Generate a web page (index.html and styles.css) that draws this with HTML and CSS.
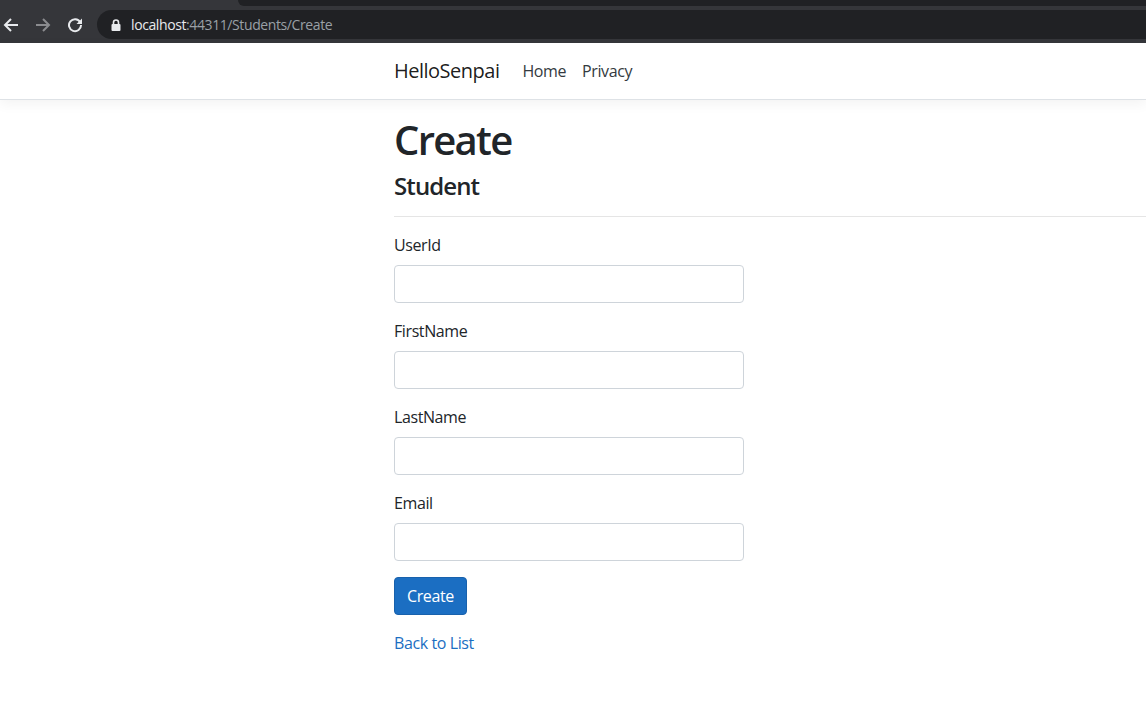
FILE: index.html
```html
<!DOCTYPE html>
<html lang="en">
<head>
<meta charset="utf-8">
<title>Create - HelloSenpai</title>
<link rel="stylesheet" href="styles.css">
</head>
<body>
<div class="chrome">
  <div class="chrome-top"><div class="top-spacer"></div><div class="top-dark"></div></div>
  <div class="chrome-bar">
    <span class="nav-btn">
      <svg width="16" height="16" viewBox="0 0 16 16"><path d="M15 8H2.5M8 2L2 8l6 6" fill="none" stroke="#e8eaed" stroke-width="2"/></svg>
    </span>
    <span class="nav-btn">
      <svg width="16" height="16" viewBox="0 0 16 16"><path d="M1 8h12.5M8 2l6 6-6 6" fill="none" stroke="#8b8c8f" stroke-width="2"/></svg>
    </span>
    <span class="nav-btn">
      <svg width="16" height="16" viewBox="0 0 16 16"><path d="M13.2 5.2A6 6 0 1 0 14 8" fill="none" stroke="#e8eaed" stroke-width="2"/><path d="M15 1.5V7H9.5z" fill="#e8eaed"/></svg>
    </span>
    <div class="omnibox">
      <svg class="lock" width="10" height="12" viewBox="0 0 10 12"><path d="M2.5 5V3.5a2.5 2.5 0 0 1 5 0V5" fill="none" stroke="#e8eaed" stroke-width="1.6"/><rect x="0.5" y="5" width="9" height="7" rx="1" fill="#e8eaed"/></svg>
      <span class="host">localhost</span><span class="path">:44311/Students/Create</span>
    </div>
  </div>
</div>

<header class="navbar">
  <a class="brand" href="#">HelloSenpai</a>
  <a class="nav-link" href="#">Home</a>
  <a class="nav-link" href="#">Privacy</a>
</header>

<main class="container">
  <h1 class="title">Create</h1>
  <h4 class="subtitle">Student</h4>
  <hr class="divider">
  <form class="form">
    <div class="form-group">
      <label class="label">UserId</label>
      <input class="input" type="text">
    </div>
    <div class="form-group">
      <label class="label">FirstName</label>
      <input class="input" type="text">
    </div>
    <div class="form-group">
      <label class="label">LastName</label>
      <input class="input" type="text">
    </div>
    <div class="form-group">
      <label class="label">Email</label>
      <input class="input" type="text">
    </div>
    <div class="form-group">
      <button class="btn" type="button">Create</button>
    </div>
  </form>
  <div><a class="link" href="#">Back to List</a></div>
</main>
</body>
</html>
```
FILE: styles.css
```css
html, body {
  margin: 0;
  padding: 0;
  background: #fff;
}
body {
  font-family: "Open Sans", "Noto Sans", sans-serif;
  font-size: 16px;
  line-height: 1.5;
  color: #212529;
  overflow-x: hidden;
}
.chrome {
  background: #35363a;
  height: 43px;
  display: flex;
  flex-direction: column;
}
.chrome-top {
  display: flex;
  height: 6px;
}
.top-spacer { width: 238px; }
.top-dark {
  flex: 1;
  background: #202124;
  border-bottom-left-radius: 6px;
}
.chrome-bar {
  display: flex;
  align-items: center;
  gap: 10px;
  height: 37px;
  padding-left: 0;
}
.nav-btn {
  width: 22px;
  height: 28px;
  display: flex;
  align-items: center;
  justify-content: center;
}
.omnibox {
  margin-left: 1px;
  flex: 1;
  height: 29px;
  background: #202124;
  border-radius: 15px 0 0 15px;
  display: flex;
  align-items: center;
  padding-left: 14px;
  font-size: 14px;
  letter-spacing: -0.4px;
}
.lock { margin-right: 10px; }
.host { color: #e8eaed; }
.path { color: #9aa0a6; }

.navbar {
  display: flex;
  align-items: center;
  height: 56px;
  padding-left: 394px;
  border-bottom: 1px solid #dee2e6;
  box-shadow: 0 4px 12px rgba(0,0,0,.05);
  margin-bottom: 16px;
}
.brand {
  font-size: 20px;
  color: rgba(0,0,0,.9);
  text-decoration: none;
  margin-right: 15px;
  letter-spacing: -0.5px;
}
.nav-link {
  color: #343a40;
  text-decoration: none;
  padding: 8px 8px;
  letter-spacing: -0.4px;
}
.container {
  padding-left: 394px;
}
.title {
  font-size: 40px;
  font-weight: 600;
  line-height: 1.2;
  margin: 0 0 8px;
  letter-spacing: -1.7px;
}
.subtitle {
  font-size: 24px;
  font-weight: 600;
  line-height: 1.2;
  margin: 0 0 8px;
  letter-spacing: -0.9px;
}
.divider {
  border: 0;
  border-top: 1px solid rgba(0,0,0,.1);
  margin: 15px 0 16px;
}
.form {
  width: 350px;
  margin: 0;
}
.form-group {
  margin-bottom: 16px;
}
.label {
  display: block;
  margin-bottom: 8px;
  letter-spacing: -0.4px;
}
.input {
  display: block;
  box-sizing: border-box;
  width: 350px;
  height: 38px;
  border: 1px solid #ced4da;
  border-radius: 4px;
  background: #fff;
  margin: 0;
}
.btn {
  font-family: inherit;
  font-size: 16px;
  line-height: 1.5;
  color: #fff;
  background: #1b6ec2;
  border: 1px solid #1861ac;
  border-radius: 4px;
  padding: 6px 12px;
  letter-spacing: -0.4px;
}
.link {
  color: #1b6ec2;
  text-decoration: none;
  letter-spacing: -0.4px;
}
```
